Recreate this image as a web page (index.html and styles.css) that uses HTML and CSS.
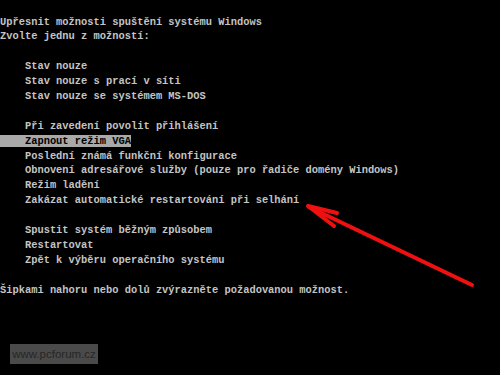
FILE: index.html
```html
<!DOCTYPE html>
<html lang="cs">
<head>
  <meta charset="UTF-8" />
  <title>Upřesnit možnosti spuštění systému Windows</title>
  <link rel="stylesheet" href="styles.css">
</head>
<body>
  <div class="screen">
    <p class="line">Upřesnit možnosti spuštění systému Windows</p>
    <p class="line">Zvolte jednu z možností:</p>
    <p class="line"> </p>
    <p class="line">    Stav nouze</p>
    <p class="line">    Stav nouze s prací v síti</p>
    <p class="line">    Stav nouze se systémem MS-DOS</p>
    <p class="line"> </p>
    <p class="line">    Při zavedení povolit přihlášení</p>
    <p class="line"><span class="selected">    Zapnout režim VGA</span></p>
    <p class="line">    Poslední známá funkční konfigurace</p>
    <p class="line">    Obnovení adresářové služby (pouze pro řadiče domény Windows)</p>
    <p class="line">    Režim ladění</p>
    <p class="line">    Zakázat automatické restartování při selhání</p>
    <p class="line"> </p>
    <p class="line">    Spustit systém běžným způsobem</p>
    <p class="line">    Restartovat</p>
    <p class="line">    Zpět k výběru operačního systému</p>
    <p class="line"> </p>
    <p class="line">Šipkami nahoru nebo dolů zvýrazněte požadovanou možnost.</p>

    <svg class="arrow" width="500" height="375" viewBox="0 0 500 375">
      <g stroke="#f01010" stroke-width="4" stroke-linecap="round" stroke-linejoin="round" fill="none">
        <line x1="472" y1="285" x2="309" y2="207" />
        <polyline points="337,213 308,206 334,226" />
      </g>
    </svg>

    <div class="watermark">www.pcforum.cz</div>
  </div>
</body>
</html>
```

FILE: styles.css
```css
* {
  margin: 0;
  padding: 0;
  box-sizing: border-box;
}

body {
  background: #000;
}

.screen {
  position: relative;
  width: 500px;
  height: 375px;
  overflow: hidden;
  background: #000;
  padding-top: 14.5px;
  color: #c4c4c4;
  font-family: "Liberation Mono", "DejaVu Sans Mono", monospace;
  font-weight: bold;
  font-size: 10.4px;
}

.line {
  height: 14.9px;
  line-height: 14.9px;
  white-space: pre;
}

.selected {
  background: #a9a9a9;
  color: #000;
}

.arrow {
  position: absolute;
  top: 0;
  left: 0;
}

.watermark {
  position: absolute;
  left: 10px;
  top: 344px;
  width: 88px;
  height: 20px;
  background: #4a4a4a;
  color: #262626;
  font-family: "Liberation Sans", Arial, sans-serif;
  font-weight: normal;
  font-size: 11.5px;
  line-height: 20px;
  text-align: center;
}
```
